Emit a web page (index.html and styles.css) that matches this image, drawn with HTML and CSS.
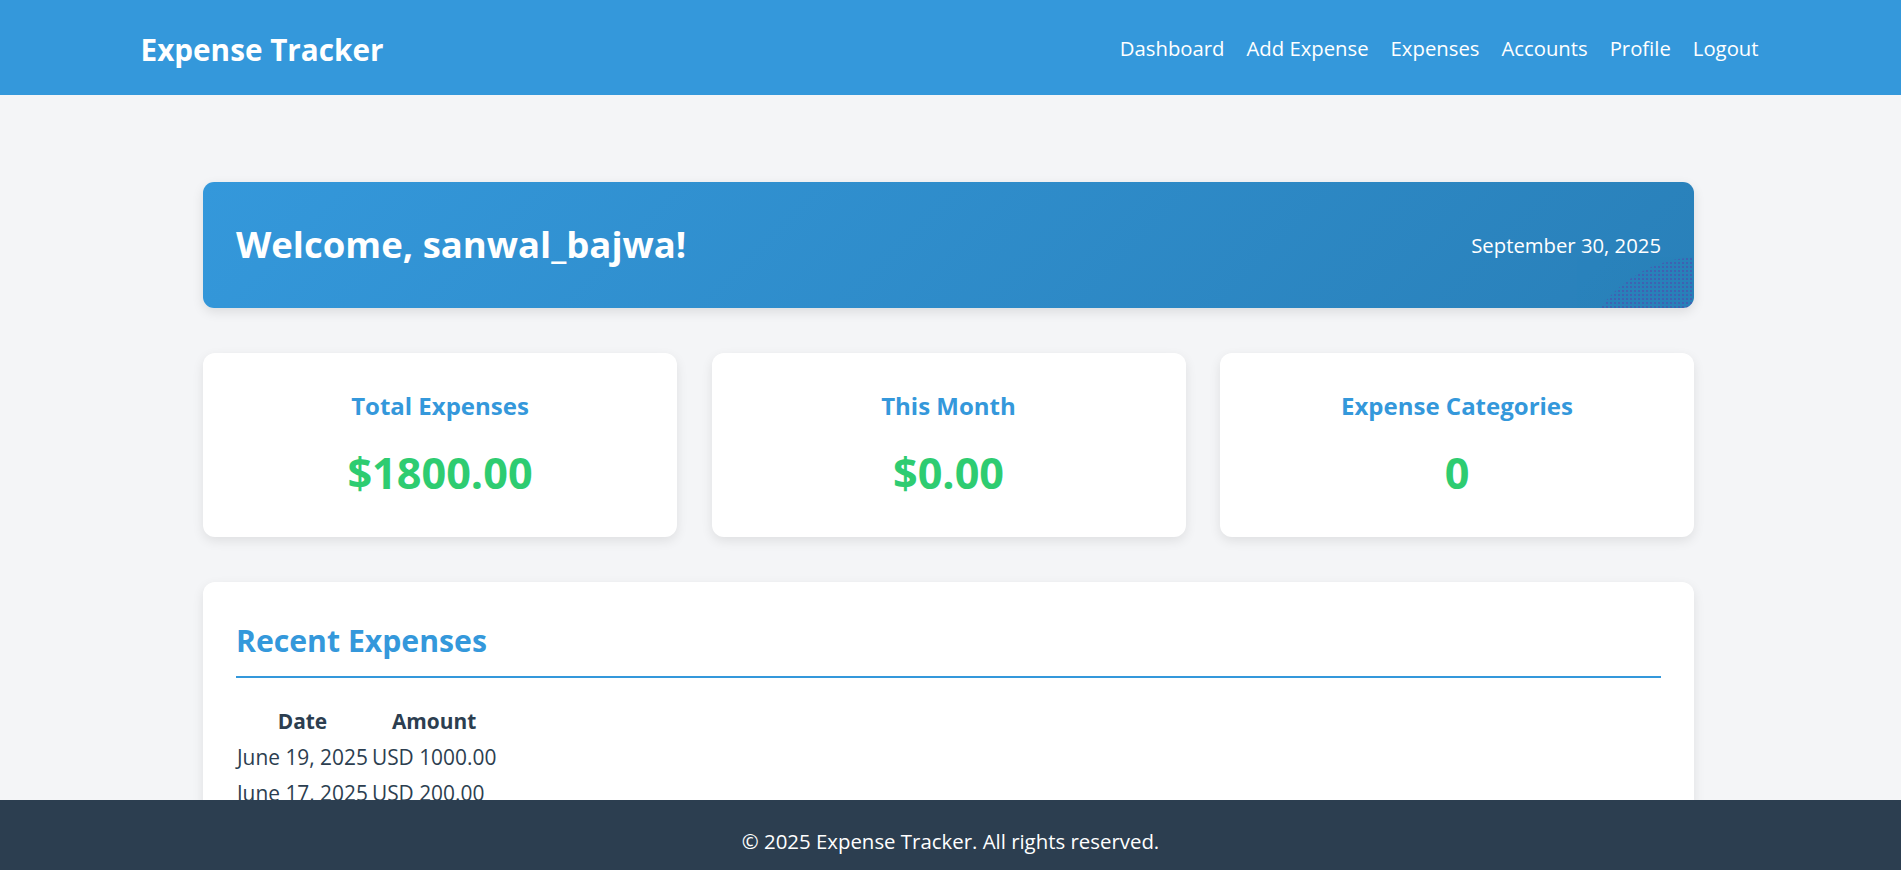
FILE: index.html
```html
<!DOCTYPE html>
<html lang="en">
<head>
<meta charset="utf-8">
<title>Expense Tracker</title>
<link rel="stylesheet" href="styles.css">
</head>
<body>
<header class="navbar">
  <div class="nav-inner">
    <a class="logo" href="#">Expense Tracker</a>
    <nav class="nav-links">
      <a href="#">Dashboard</a>
      <a href="#">Add Expense</a>
      <a href="#">Expenses</a>
      <a href="#">Accounts</a>
      <a href="#">Profile</a>
      <a href="#">Logout</a>
    </nav>
  </div>
</header>

<main class="main">
  <div class="container">
    <section class="welcome">
      <h1 class="welcome-title">Welcome, sanwal_bajwa!</h1>
      <span class="welcome-date">September 30, 2025</span>
    </section>

    <section class="stats">
      <div class="stat-card">
        <h3 class="stat-title">Total Expenses</h3>
        <p class="stat-value">$1800.00</p>
      </div>
      <div class="stat-card">
        <h3 class="stat-title">This Month</h3>
        <p class="stat-value">$0.00</p>
      </div>
      <div class="stat-card">
        <h3 class="stat-title">Expense Categories</h3>
        <p class="stat-value">0</p>
      </div>
    </section>

    <section class="recent">
      <h2 class="recent-title">Recent Expenses</h2>
      <table class="recent-table">
        <thead>
          <tr><th>Date</th><th>Amount</th></tr>
        </thead>
        <tbody>
          <tr><td>June 19, 2025</td><td>USD 1000.00</td></tr>
          <tr><td>June 17, 2025</td><td>USD 200.00</td></tr>
          <tr><td>June 12, 2025</td><td>USD 300.00</td></tr>
          <tr><td>June 5, 2025</td><td>USD 300.00</td></tr>
        </tbody>
      </table>
    </section>
  </div>
</main>

<footer class="footer">
  <p class="footer-text">&copy; 2025 Expense Tracker. All rights reserved.</p>
</footer>
</body>
</html>
```

FILE: styles.css
```css
* {
  box-sizing: border-box;
}

html, body {
  margin: 0;
  padding: 0;
}

body {
  font-family: "Open Sans", "Noto Sans", "Liberation Sans", sans-serif;
  background: #f4f5f7;
  color: #2c3e50;
  font-size: 20px;
  min-height: 870px;
}

/* Navbar */
.navbar {
  background: #3498db;
  height: 95px;
}

.nav-inner {
  max-width: 1620px;
  height: 100%;
  margin: 0 auto;
  padding-right: 2px;
  display: flex;
  align-items: center;
  justify-content: space-between;
}

.logo {
  color: #ffffff;
  text-decoration: none;
  font-weight: 700;
  font-size: 29.7px;
  margin-top: 4px;
}

.nav-links {
  display: flex;
  gap: 22px;
}

.nav-links a {
  color: #ffffff;
  text-decoration: none;
  font-size: 20.3px;
}

/* Main */
.main {
  padding: 87px 0 120px;
}

.container {
  max-width: 1491px;
  margin: 0 auto;
  position: relative;
  left: -2px;
}

.welcome {
  position: relative;
  overflow: hidden;
  height: 126px;
  padding: 0 33px;
  border-radius: 11px;
  background: linear-gradient(135deg, #3498db 0%, #2980b9 100%);
  color: #ffffff;
  display: flex;
  align-items: center;
  justify-content: space-between;
  box-shadow: 0 4px 12px rgba(0, 0, 0, 0.1);
}

.welcome::after {
  content: "";
  position: absolute;
  width: 246px;
  height: 246px;
  right: -129px;
  bottom: -195px;
  border-radius: 50%;
  background-image: radial-gradient(rgba(90, 60, 170, 0.55) 0.8px, transparent 1.1px);
  background-size: 4px 4px;
  opacity: 0.8;
}

.welcome-title {
  margin: 0;
  font-size: 36.5px;
  font-weight: 700;
  line-height: 1.2;
  position: relative;
  z-index: 1;
}

.welcome-date {
  font-size: 20.3px;
  position: relative;
  z-index: 1;
}

/* Stats */
.stats {
  display: grid;
  grid-template-columns: repeat(3, 1fr);
  gap: 34.5px;
  margin-top: 45px;
}

.stat-card {
  background: #ffffff;
  border-radius: 12px;
  height: 184px;
  padding: 37px 20px 0;
  text-align: center;
  box-shadow: 0 4px 12px rgba(0, 0, 0, 0.09);
}

.stat-title {
  margin: 0;
  color: #3498db;
  font-size: 24px;
  font-weight: 700;
  line-height: 32px;
}

.stat-value {
  margin: 23px 0 0;
  color: #2ecc71;
  font-size: 43.2px;
  font-weight: 700;
  line-height: 56px;
}

/* Recent */
.recent {
  margin-top: 45px;
  background: #ffffff;
  border-radius: 12px;
  padding: 39px 33px 40px;
  box-shadow: 0 4px 12px rgba(0, 0, 0, 0.09);
}

.recent-title {
  margin: 0 0 24px;
  padding-bottom: 15px;
  border-bottom: 2px solid #3498db;
  color: #3498db;
  font-size: 30.2px;
  font-weight: 700;
  line-height: 40px;
}

.recent-table {
  margin-left: -2px;
  font-size: 20.9px;
  color: #2c3e50;
  line-height: 32px;
}

.recent-table th {
  font-weight: 700;
  color: #2c3e50;
}

/* Footer */
.footer {
  position: fixed;
  left: 0;
  right: 0;
  bottom: 0;
  height: 70px;
  padding-top: 12px;
  background: #2c3e50;
  display: flex;
  align-items: center;
  justify-content: center;
}

.footer-text {
  margin: 0;
  color: #ffffff;
  font-size: 20.4px;
}
```
